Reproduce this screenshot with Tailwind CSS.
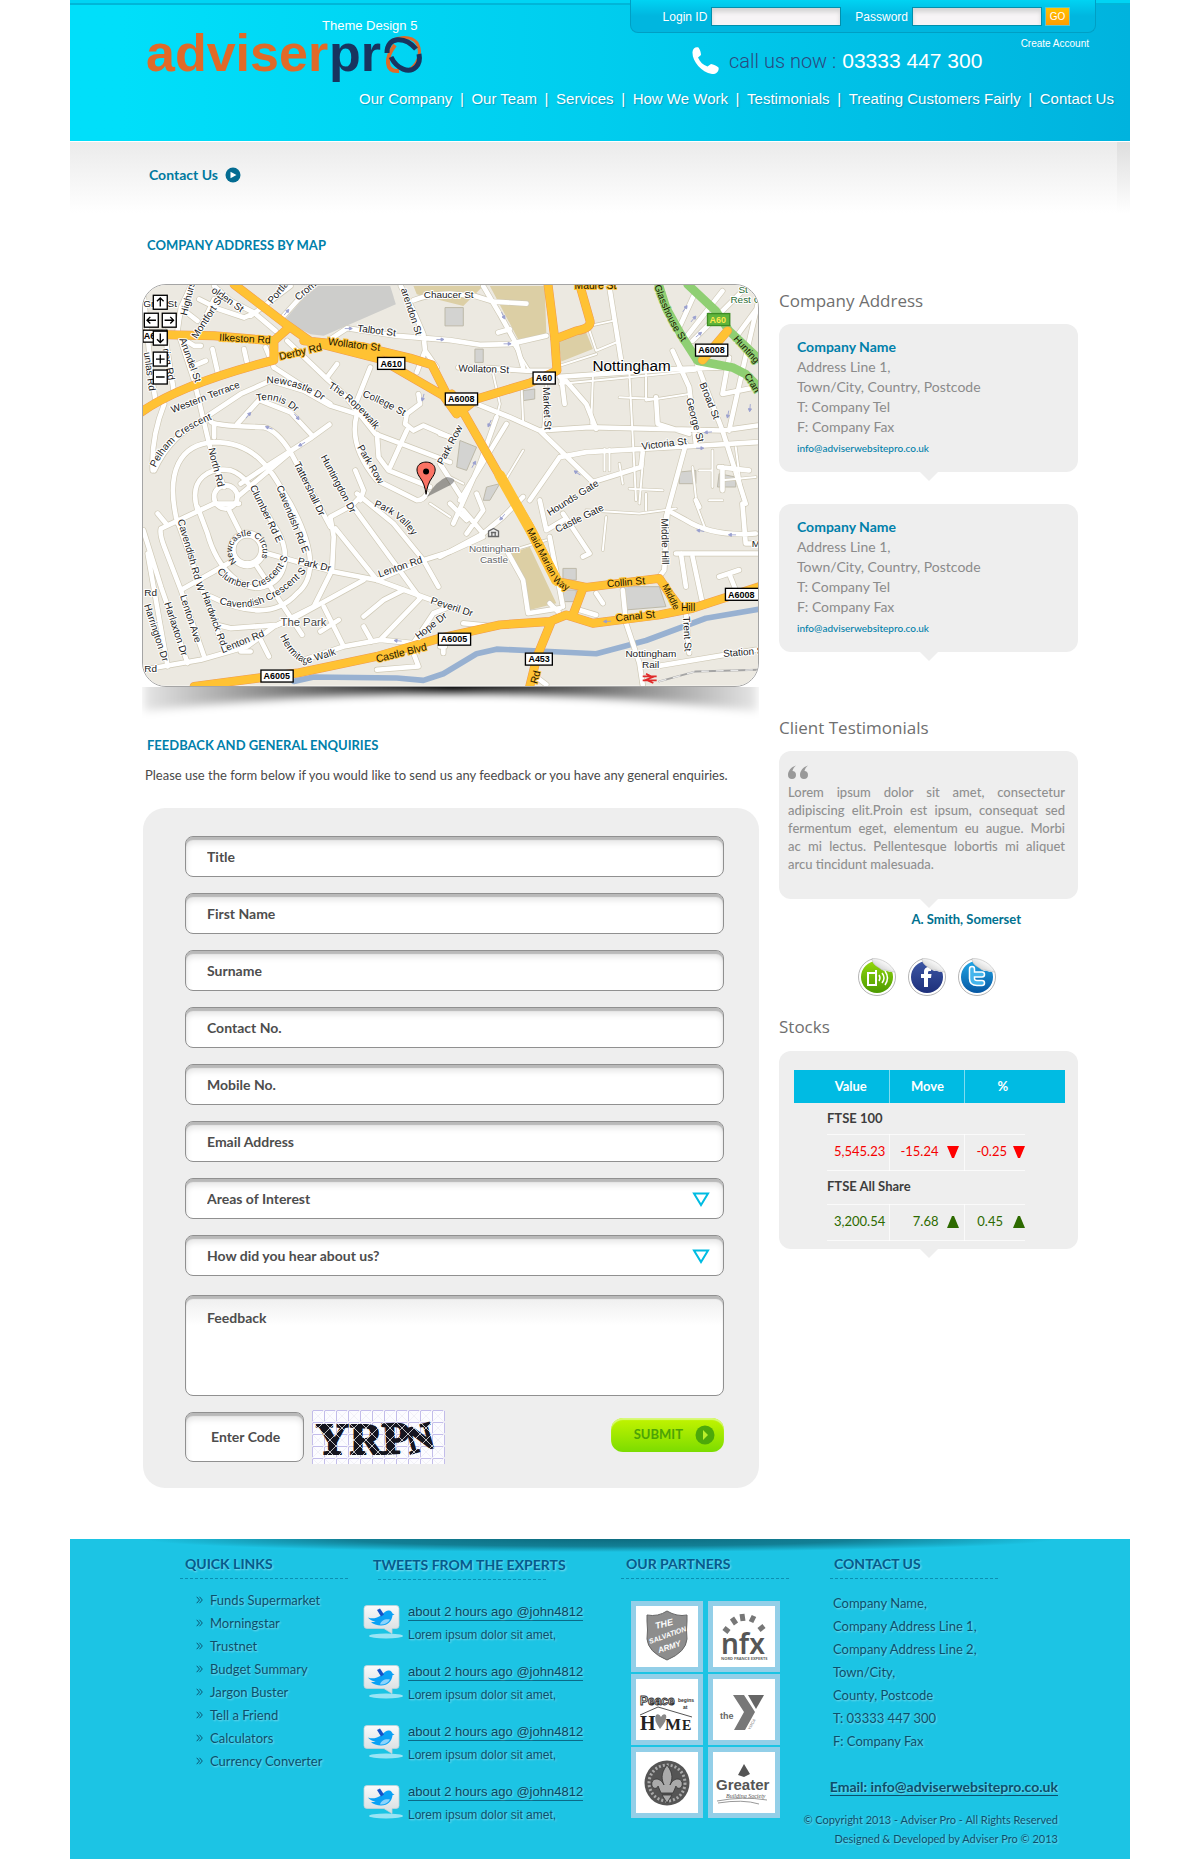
<!DOCTYPE html>
<html lang="en">
<head>
<meta charset="utf-8">
<meta name="viewport" content="width=device-width, initial-scale=1">
<title>Contact Us - Adviser Pro</title>
<script src="https://cdn.jsdelivr.net/npm/@tailwindcss/browser@4"></script>
</head>
<body class="bg-white font-['Lato','Open_Sans',sans-serif] text-[14px] text-[#4a4a4a]">
<svg class="absolute size-0" aria-hidden="true">
  <defs>
    <linearGradient id="bubble" x1="0" y1="0" x2="0" y2="1"><stop offset="0" stop-color="#fafafa"/><stop offset="1" stop-color="#d5dde0"/></linearGradient>
    <linearGradient id="gGreen" x1="0" y1="0" x2="0" y2="1"><stop offset="0" stop-color="#93d80d"/><stop offset="1" stop-color="#4c9a00"/></linearGradient>
    <linearGradient id="gNavy" x1="0" y1="0" x2="0" y2="1"><stop offset="0" stop-color="#3d57a5"/><stop offset="1" stop-color="#1d2f7a"/></linearGradient>
    <linearGradient id="gBlue" x1="0" y1="0" x2="0" y2="1"><stop offset="0" stop-color="#22a6e6"/><stop offset="1" stop-color="#0556a2"/></linearGradient>
    <linearGradient id="fold" x1="0" y1="1" x2="1" y2="0"><stop offset="0" stop-color="#bdbdbd"/><stop offset=".6" stop-color="#f4f4f4"/><stop offset="1" stop-color="#ffffff"/></linearGradient>
    <symbol id="tweet" viewBox="0 0 40 34">
      <ellipse cx="23" cy="31" rx="17" ry="2.4" fill="#b9ecf7" opacity=".8"/>
      <path d="M4 .5h29a3 3 0 0 1 3 3v17a3 3 0 0 1-3 3h-4v5l-8-5H4a3 3 0 0 1-3-3v-17a3 3 0 0 1 3-3z" fill="url(#bubble)" stroke="#c3d3d8" stroke-width=".8"/>
      <path d="M5 12.500c4 1.500 8 1 12-1.500 3-1.500 5-6 9-5.500 2 0 3 1.500 3.500 3l2 1-2 .8C29 16 25 20.500 18 20.500c-4 0-8-1.500-10-3.500 2 0 3.500 0 4.500-.5C9 16 6 14 5 12.500z" fill="#0aa2f5"/>
      <path d="M14 5l3-1.500 4 6-3 2z" fill="#1553c8"/>
      <path d="M17 19.500c1-4 5-6 10-5-2 4-6 5.500-10 5z" fill="#8bd3fb"/>
    </symbol>
    <symbol id="chev" viewBox="0 0 7 8"><path d="M.7.800L3.500 4 .7 7.200M3.500.800L6.300 4 3.500 7.200" fill="none" stroke="#0b5572" stroke-width="1"/></symbol>
    <symbol id="arrow" viewBox="0 0 24 12"><path d="M0 6H17M14 1l9 5-9 5z" fill="#9aa0cf" stroke="#9aa0cf" stroke-width="2.500"/></symbol>
  </defs>
</svg>

<div class="mx-auto w-full max-w-[1060px]">

  <header class="bg-linear-to-r from-[#00dffa] from-5% via-[#00cdee] via-50% to-[#00b3de] font-['Liberation_Sans',Arial,sans-serif] text-white">
    <div class="h-[5px] border-b-2 border-[#00a9cc]/70 bg-[#00d4f4]"></div>
    <div class="flex items-start justify-between">
      <a href="#" class="ml-[76px] block pt-3" aria-label="Adviser Pro, Theme Design 5">
        <svg class="block h-[66px] w-[280px]" viewBox="0 0 280 66" font-family="Liberation Sans, Arial, sans-serif">
          <text x="176" y="13" font-size="13" fill="#fff">Theme Design 5</text>
          <text x="0" y="54" font-size="52" font-weight="700" fill="#e06a28">adviser</text>
          <text x="183" y="54" font-size="52" font-weight="700" fill="#18345f">pr</text>
          <g fill="none" transform="translate(257 37)">
            <path d="M-15-9C-10-18 8-19 14-11 20 0 14 12 4 17" stroke="#e06a28" stroke-width="3"/>
            <path d="M-4 17C-18 18-18 4-8-9" stroke="#e06a28" stroke-width="4"/>
            <path d="M-16-1C-16-18 2-18 13-5" stroke="#18345f" stroke-width="5"/>
            <path d="M-12 3C-6 15 6 20 13 13 17 9 17 5 16 0" stroke="#18345f" stroke-width="5"/>
          </g>
        </svg>
      </a>
      <div class="mr-[34px] -mt-[5px] w-[466px]">
        <form class="flex h-[33px] items-start justify-end rounded-b-lg border-x border-b border-[#009fc4] bg-linear-to-b from-[#00d3f3] to-[#00b6df] to-50% pt-[7px] pr-[25px] text-[12px] leading-5">
          <label for="login" class="mr-1">Login ID</label>
          <input id="login" type="text" class="h-[19px] w-[130px] border border-[#0090ad] bg-[#f7f4f6] px-1 text-gray-700 shadow-[inset_0_4px_4px_#d4d4d4]">
          <label for="pass" class="mr-1 ml-[14px]">Password</label>
          <input id="pass" type="password" class="h-[19px] w-[130px] border border-[#0090ad] bg-[#f7f4f6] px-1 text-gray-700 shadow-[inset_0_4px_4px_#d4d4d4]">
          <button type="submit" class="ml-[3px] h-[19px] w-[25px] border border-[#5cc6d0] bg-linear-to-b from-[#ffc000] to-[#ff9c00] text-[10px] leading-4">GO</button>
        </form>
        <div class="flex justify-between pr-[7px]">
          <p class="flex items-center pt-[12px] pl-[62px] text-[21px] leading-8">
            <svg class="mr-[10px] h-7 w-[27px]" viewBox="0 0 27 28" aria-hidden="true"><path d="M6.500.500c1.500 2 2.500 5 2.500 7.500L6 10.500c2 4.500 5 7.500 9.500 9l3.500-2.500c2.500.5 5.500 1.500 7.500 3.500 1 3.500-2.500 7-6.500 6.500C9 25 0 14 .5 5 .8 1.500 3.500-.5 6.500.500z" fill="#fff"/></svg>
            <span class="mr-[6px] font-['Roboto',sans-serif] text-[20px] font-light text-[#2b4a80]">call us now :</span><span>03333 447 300</span>
          </p>
          <a href="#" class="pt-[3px] text-[10px] leading-4">Create Account</a>
        </div>
      </div>
    </div>
    <nav class="mr-4 ml-auto flex max-w-[755px] justify-between pt-[5px] pb-[31px] text-[15px] leading-[22px] [text-shadow:1px_1px_1px_rgba(0,110,150,.5)]">
      <a href="#">Our Company</a><span>|</span><a href="#">Our Team</a><span>|</span><a href="#">Services</a><span>|</span><a href="#">How We Work</a><span>|</span><a href="#">Testimonials</a><span>|</span><a href="#">Treating Customers Fairly</a><span>|</span><a href="#">Contact Us</a>
    </nav>
  </header>

  <div class="flex h-[72px] border-t border-white bg-linear-to-b from-[#ebebeb] to-white">
    <div class="flex flex-1 items-start gap-[7px] pt-[23px] pl-[79px]">
      <h1 class="text-[14px] leading-5 font-bold text-[#00799f]">Contact Us</h1>
      <svg class="mt-[2px] size-4" viewBox="0 0 16 16" aria-hidden="true"><circle cx="8" cy="8" r="7.500" fill="#046c92"/><path d="M5.500 4.800v6.400L11.500 8z" fill="#fff"/></svg>
    </div>
    <div class="w-[13px] bg-linear-to-b from-[#dedede] to-white"></div>
  </div>

  <main class="flex items-start gap-5 pr-[52px] pl-[72px]">
    <div class="w-[617px] shrink">
      <h2 class="mt-[22px] pl-[5px] text-[13px] leading-5 font-bold text-[#0080aa]">COMPANY ADDRESS BY MAP</h2>
      <figure class="mt-[29px]">
        <svg class="block h-auto w-full rounded-[24px] border border-[#a5a5a5]" viewBox="36 42 1851 1206" font-family="Liberation Sans, Arial, sans-serif" role="img" aria-label="Street map of Nottingham">
          <defs>
            <g id="wide">
              <path d="M180 45L150 110 140 180 190 330 235 520 260 600 280 650M250 45L300 90 370 125 435 180M480 45L360 135M540 45L455 140M205 85L265 115 340 140 375 125M250 85L200 190M37 100H130M155 115L200 150M37 60L60 300 75 400M100 180L130 370M150 200L190 225H210M190 285L225 270M245 235L262 310M340 235L350 280M405 230L430 290M600 205L650 172 800 195 960 208 1050 222 1140 220 1250 195M812 45L850 120 880 190 885 240 920 290M885 240L860 305M850 88Q900 68 960 68L1035 75 1090 92 1190 98"/>
              <path d="M225 440L330 370 420 330 520 360 600 405 680 430M430 290L600 400M470 210L590 325 640 370 735 490 960 575M720 290L680 390M680 430C660 500 690 570 740 630L860 690Q880 690 890 670M740 490L745 560 775 600 900 650M830 480L780 590M865 370L870 400 830 430 825 460 850 480 880 465 960 500M620 280L590 320M240 450Q230 465 400 470 440 480 480 545L600 770M320 460L385 388 480 425 545 495M597 462L545 500 420 580 330 640M100 400Q60 500 65 600M225 445Q120 490 70 600M250 460V500M675 600L700 660 690 690"/>
              <path d="M140 760C100 600 150 520 250 515 390 515 430 620 480 700 550 830 560 920 500 970 420 1060 300 1010 240 980M200 720C170 620 240 590 300 600 360 620 380 690 440 780 480 850 470 930 400 950 340 970 260 900 230 790L200 710M320 680L480 545M325 700L250 700 90 775Q85 790 100 830L150 960 220 1160M80 730L105 760M135 740L200 920 280 1140M37 780L90 950 170 1180M50 850L110 1190M37 1200L210 1170 350 1130 430 1070 500 1040 700 930M740 930L880 870 960 845 1060 800M150 960L310 870M295 720L330 790M380 890L515 1095M410 850L500 875 610 905 740 930 890 985 960 1010"/>
              <path d="M600 740L610 800 605 900 550 1010 440 1065 300 1075 260 1065M615 775L740 930M665 705L870 985 750 1110 640 1130 520 1170M600 740L665 705 690 680M680 670L790 760 880 870 925 950M580 1010L640 1130M700 1040L760 990 820 960M700 1070L725 1115M750 1110L850 1120 910 1030 960 1010M330 1145H360M390 1110L415 1160M570 1085L625 1050M850 1150L865 1190 740 1200M940 1130V1150"/>
              <path d="M1060 45L1110 130 1160 220 1180 290M1105 185L1140 175M985 290L1080 292 1190 300 1280 300M1290 318L1640 295 1780 290M1440 50L1480 300M1300 320L1370 400 1400 475M1295 320L1305 400M1040 400L1140 440 1230 480 1390 635M1230 480L1380 470 1780 480 1886 465M1290 560L1370 545 1720 525 1886 515M1390 635L1535 590 1540 545M1290 560L1200 690M1630 240L1680 350 1700 520M1700 270L1730 350 1780 480 1850 700M1100 440L1050 580 970 760M1130 460L990 690M930 490L960 500M930 580L1000 690M1670 520L1610 740M1580 380L1585 460 1680 490M1886 100L1840 300 1800 480M1700 60L1650 170M1850 50L1690 210M1780 60L1670 200M1886 110L1820 200M1800 260L1780 370 1880 350M1770 590L1860 600M1780 590V660"/>
              <path d="M930 860L1060 790 1120 740 1180 680M1010 790L1060 720 1040 670M1010 750L960 700M1060 790L1000 720M1130 840L1180 930 1195 1030 1290 1015M1260 1000L1300 1040M1260 800L1300 1010M1230 690L1250 780 1300 750M1300 730L1380 850 1360 860M1615 720L1670 750Q1750 800 1880 790M1615 720L1605 900 1590 920M1640 850H1886M1655 850L1670 950M1690 860L1720 1000M1770 920L1830 900M1800 910L1820 960M1480 960L1490 1060 1530 1180 1540 1245M1400 970L1420 1000M1350 1020L1400 1035M1670 1030L1680 1150M1580 1190L1880 1140M1000 1060L1100 1070M930 1130H945M1700 690L1710 710M1840 700L1850 820 1886 820M1210 1215L1250 1245"/>
            </g>
            <path id="thin" d="M1380 165L1450 150M1380 180L1400 240 1460 215M1290 285L1400 250M1150 220L1200 300M1090 310L1110 400 1100 440M1175 340L1180 450M1500 310L1520 690M1550 310V390L1680 370M1470 380L1580 385M1390 320L1385 460M1425 535V600M1440 535L1440 600M1290 340L1700 300M1180 540L1120 640M1690 590L1700 680M1880 620L1780 630M1500 655L1600 660M1370 720L1530 730 1640 715M1430 740L1420 840M1750 540V650M1710 600L1750 600M1550 670V720M1740 690L1780 690M1700 700L1730 780M1820 530L1840 680M900 700L960 740M960 620L1000 640M1150 840L1250 810M1240 480L1250 340M1540 580L1530 700M1470 580L1480 640"/>
            <path id="main" d="M310 40L460 155 540 212M30 190L250 195 430 210M30 425Q150 340 430 268L430 210 475 170M520 210L700 228 840 262 905 282 965 400 980 420M540 212L750 265 940 375 980 430M965 370L1000 425 1100 600 1200 770 1285 935 1370 952 1590 925 1620 970 1650 1010M190 1250L500 1210 740 1160 930 1105 1110 1065 1260 1055 1310 1035 1390 1060 1590 1035 1690 1015 1890 950M1360 955L1330 1035M1265 1055L1222 1160 1200 1250M1255 40L1275 200 1282 300 1200 337 1040 385 990 425M1350 40L1380 145Q1390 172 1340 180L1275 205M1795 180L1720 268"/>
            <path id="pNewc" d="M408 338Q500 335 590 400"/><path id="pTennis" d="M378 392Q450 375 510 440"/><path id="pPelham" d="M74 592Q120 490 260 440"/>
            <path id="pRope" d="M592 350Q690 410 750 500"/><path id="pColl" d="M695 378Q760 400 850 455"/><path id="pClum" d="M258 905Q310 970 400 945 460 910 480 840"/>
            <path id="pCav" d="M265 1000Q400 1050 540 890"/><path id="pCircus" d="M318 876A46 46 0 1 1 392 862"/><path id="pHerm" d="M448 1100Q485 1175 530 1182L670 1138"/>
            <path id="pPark" d="M730 708Q820 740 860 820"/><path id="pMaid" d="M1190 780L1270 930Q1290 960 1370 985"/>
            <path id="pGlass" d="M1575 45Q1620 180 1695 260"/>
          </defs>
          <rect x="36" y="42" width="1851" height="1206" fill="#ece9e1"/>
          <path d="M550 45H780L797 100 580 195 540 190 460 150z" fill="#cdcdcb"/>
          <path d="M850 45H1060L1000 105 860 70zM1080 45H1245L1250 190 1165 205zM1285 205L1370 185 1390 235 1295 272zM1145 850L1200 830 1280 1000 1200 1020z" fill="#dccfa5"/>
          <path d="M945 110H1000V165H945zM1035 235H1060V275H1035zM1180 360L1215 355V385L1180 390zM990 510L1040 530 1010 600 980 590zM1070 650L1110 640 1080 690 1060 690zM1300 895H1340V930H1300zM1300 960H1340V995H1300zM1485 950H1590L1610 1010 1490 1020zM1650 605L1700 600V640H1650zM1770 610L1820 620V650L1765 650z" fill="#d3d3d1" stroke="#bdb9a9" stroke-width="3"/>
          <g fill="none" stroke-linejoin="round" stroke-linecap="round">
            <path d="M490 1235L550 1222 800 1225 880 1232 940 1212 1040 1152 1100 1138 1260 1145 1400 1152 1550 1112 1730 1045 1890 1018" stroke="#98b1d1" stroke-width="17"/>
            <use href="#thin" stroke="#cfc9b6" stroke-width="10"/>
            <use href="#wide" stroke="#cfc9b6" stroke-width="18"/>
            <circle cx="285" cy="680" r="35" stroke="#cfc9b6" stroke-width="18"/>
            <circle cx="350" cy="838" r="46" stroke="#cfc9b6" stroke-width="26"/>
            <use href="#thin" stroke="#fff" stroke-width="6"/>
            <use href="#wide" stroke="#fff" stroke-width="14"/>
            <circle cx="285" cy="680" r="35" stroke="#fff" stroke-width="14"/>
            <circle cx="350" cy="838" r="46" stroke="#fff" stroke-width="22"/>
            <path d="M1588 40L1610 110 1660 200 1705 270 1810 290 1850 310 1890 350M1675 40L1760 120 1800 180 1890 265" stroke="#8fcf73" stroke-width="26"/>
            <use href="#main" stroke="#ef9a52" stroke-width="27"/>
            <use href="#main" stroke="#ffc233" stroke-width="24"/>
            <path d="M1110 615L1200 775 1280 930" stroke="#ffc233" stroke-width="32"/>
            <path d="M1590 1235L1700 1205 1890 1200" stroke="#a5a5a5" stroke-width="6"/>
            <path d="M1590 1235L1700 1205 1890 1200" stroke="#e8e8e8" stroke-width="4" stroke-dasharray="20 24"/>
          </g>
          <g>
            <use href="#arrow" width="26" height="12" x="642" y="167"/><use href="#arrow" width="26" height="12" x="918" y="200"/><use href="#arrow" width="26" height="12" x="1120" y="213"/>
            <use href="#arrow" width="26" height="12" transform="translate(455 130) rotate(-50)"/><use href="#arrow" width="26" height="12" transform="translate(340 440) rotate(-50)"/><use href="#arrow" width="26" height="12" transform="translate(495 425) rotate(50)"/>
            <use href="#arrow" width="26" height="12" transform="translate(425 482) rotate(200)"/><use href="#arrow" width="26" height="12" transform="translate(528 520) rotate(150)"/><use href="#arrow" width="26" height="12" transform="translate(888 370) rotate(105)"/>
            <use href="#arrow" width="26" height="12" transform="translate(1120 120) rotate(65)"/><use href="#arrow" width="26" height="12" transform="translate(1090 450) rotate(115)"/><use href="#arrow" width="26" height="12" transform="translate(1020 590) rotate(-60)"/>
            <use href="#arrow" width="26" height="12" transform="translate(1350 620) rotate(215)"/><use href="#arrow" width="26" height="12" transform="translate(1750 490) rotate(175)"/><use href="#arrow" width="26" height="12" x="1700" y="527"/>
            <use href="#arrow" width="26" height="12" transform="translate(1655 120) rotate(-55)"/><use href="#arrow" width="26" height="12" transform="translate(1680 150) rotate(-50)"/><use href="#arrow" width="26" height="12" transform="translate(1695 195) rotate(-40)"/>
            <use href="#arrow" width="26" height="12" transform="translate(1805 420) rotate(100)"/><use href="#arrow" width="26" height="12" transform="translate(1870 400) rotate(95)"/><use href="#arrow" width="26" height="12" transform="translate(1130 735) rotate(130)"/>
            <use href="#arrow" width="26" height="12" transform="translate(1725 790) rotate(190)"/><use href="#arrow" width="26" height="12" transform="translate(1822 800) rotate(180)"/><use href="#arrow" width="26" height="12" transform="translate(1446 1060) rotate(178)"/><use href="#arrow" width="26" height="12" transform="translate(815 1120) rotate(185)"/>
          </g>
          <g font-size="30" fill="#1c1c1c" stroke="#fff" stroke-width="6" stroke-linejoin="round" paint-order="stroke">
            <text transform="translate(240 62) rotate(35)">olden St</text><text transform="translate(168 135) rotate(-76)">Highurs</text><text transform="translate(198 205) rotate(-57)">Montfort St</text>
            <text x="37" y="108">Gra</text><text x="110" y="108">St</text><text transform="translate(145 205) rotate(70)">Arundel St</text><text transform="translate(38 245) rotate(82)">unlas Rd</text><text transform="translate(95 235) rotate(80)">ring Rd</text>
            <text transform="translate(425 100) rotate(-50)">Portla</text><text transform="translate(503 90) rotate(-40)">Crom</text><text transform="translate(812 55) rotate(72)">arendon St</text><text x="881" y="82">Chaucer St</text>
            <text transform="translate(680 182) rotate(7)">Talbot St</text><text transform="translate(125 428) rotate(-21)">Western Terrace</text>
            <text><textPath href="#pNewc">Newcastle Dr</textPath></text><text><textPath href="#pTennis">Tennis Dr</textPath></text><text><textPath href="#pPelham">Pelham Crescent</textPath></text>
            <text><textPath href="#pRope">The Ropewalk</textPath></text><text><textPath href="#pColl">College St</textPath></text><text><textPath href="#pClum">Clumber Crescent S</textPath></text><text><textPath href="#pCav">Cavendish Crescent S</textPath></text>
            <text font-size="26" stroke="none"><textPath href="#pCircus">Newcastle Circus</textPath></text><text><textPath href="#pHerm">Hermitage Walk</textPath></text><text><textPath href="#pPark">Park Valley</textPath></text>
            <text transform="translate(232 535) rotate(76)">North Rd</text><text transform="translate(680 530) rotate(60)">Park Row</text><text transform="translate(570 560) rotate(62)">Huntingdon Dr</text><text transform="translate(490 580) rotate(64)">Tattershall Dr</text>
            <text transform="translate(437 650) rotate(68)">Cavendish Rd E</text><text transform="translate(357 650) rotate(64)">Clumber Rd E</text><text transform="translate(140 750) rotate(74)">Cavendish Rd W</text><text transform="translate(212 970) rotate(70)">Hardwick Rd</text>
            <text transform="translate(147 978) rotate(72)">Lenton Ave</text><text transform="translate(100 1000) rotate(72)">Harlaxton Dr</text><text transform="translate(39 1006) rotate(72)">Harrington Dr</text><text x="40" y="977">Rd</text><text x="40" y="1206">Rd</text>
            <text transform="translate(275 1150) rotate(-22)">Lenton Rd</text><text transform="translate(748 922) rotate(-19)">Lenton Rd</text><text transform="translate(500 882) rotate(13)">Park Dr</text><text transform="translate(865 1110) rotate(-38)">Hope Dr</text><text transform="translate(900 1000) rotate(18)">Peveril Dr</text>
            <text transform="translate(938 585) rotate(-62)">Park Row</text><text transform="translate(985 302) rotate(2)">Wollaton St</text><text transform="translate(1240 350) rotate(88)">Market St</text><text transform="translate(1710 340) rotate(68)">Broad St</text><text transform="translate(1670 385) rotate(75)">George St</text>
            <text transform="translate(1538 538) rotate(-7)">Victoria St</text><text transform="translate(1260 738) rotate(-32)">Hounds Gate</text><text transform="translate(1283 788) rotate(-26)">Castle Gate</text><text transform="translate(1596 745) rotate(89)">Middle Hill</text><text transform="translate(1661 1040) rotate(87)">Trent St</text>
            <text transform="translate(1783 1162) rotate(-5)">Station S</text><text x="1488" y="1163">Nottingham</text><text x="1538" y="1196">Rail</text><text x="1868" y="830">M</text><g fill="#2c6b33"><text x="1828" y="65">St</text><text x="1804" y="96">Rest G</text></g>
            <text x="1017" y="847" fill="#666">Nottingham</text><text x="1050" y="880" fill="#666">Castle</text><text x="450" y="1068" font-size="34" fill="#444">The Park</text>
            <text x="1389" y="300" font-size="46" fill="#000">Nottingham</text>
          </g>
          <g font-size="31" fill="#1a1400" stroke="#ffc233" stroke-width="6" paint-order="stroke">
            <text transform="translate(265 210) rotate(3)">Ilkeston Rd</text><text transform="translate(448 268) rotate(-13)">Derby Rd</text><text transform="translate(592 222) rotate(7)">Wollaton St</text><text transform="translate(740 1178) rotate(-14)">Castle Blvd</text>
            <text font-size="29"><textPath href="#pMaid">Maid Marian Way</textPath></text><text transform="translate(1433 952) rotate(-5)">Collin St</text><text transform="translate(1460 1055) rotate(-6)">Canal St</text><text font-size="28" transform="translate(1598 948) rotate(63)">Middle</text><text x="1655" y="1024">Hill</text>
            <text x="1335" y="54">Maure St</text><text transform="translate(1222 1244) rotate(-75)">Rd</text>
            <g stroke="#8fcf73" font-size="29"><text><textPath href="#pGlass">Glasshouse St</textPath></text><text transform="translate(1812 205) rotate(48)">Hunting</text><text transform="translate(1845 315) rotate(58)">Cran</text></g>
          </g>
          <g fill="#fff" stroke="#000" stroke-width="4"><rect x="742" y="260" width="82" height="36"/><rect x="1210" y="304" width="67" height="36"/><rect x="946" y="367" width="97" height="36"/><rect x="1699" y="220" width="97" height="36"/><rect x="391" y="1201" width="97" height="36"/><rect x="925" y="1090" width="97" height="36"/><rect x="1187" y="1150" width="81" height="36"/><rect x="1789" y="955" width="100" height="36"/><rect x="36" y="178" width="72" height="36"/><rect x="1735" y="128" width="67" height="36" fill="#60b53c" stroke="#3c8d24"/></g>
          <g font-size="27" font-weight="700" fill="#000"><text x="751" y="288">A610</text><text x="1218" y="332">A60</text><text x="954" y="395">A6008</text><text x="1707" y="248">A6008</text><text x="399" y="1229">A6005</text><text x="932" y="1118">A6005</text><text x="1196" y="1178">A453</text><text x="1797" y="983">A6008</text><text x="38" y="206">A6</text><text x="1741" y="156" fill="#ffe84a">A60</text></g>
          <g transform="translate(1091 787)" fill="none" stroke="#666" stroke-width="4"><path d="M-15 12V-4L0-12 15-4V12zM-8 0H8M-5 0V10M5 0V10" fill="#eee"/></g>
          <path d="M1540 1220H1582M1540 1232H1582M1550 1212L1570 1222 1550 1230 1572 1240" fill="none" stroke="#e02b2b" stroke-width="5"/>
          <path d="M890 680Q920 630 950 620 990 625 960 645z" fill="#000" opacity=".35"/>
          <path d="M888 672Q884 640 870 622C850 595 865 575 888 575S926 595 906 622Q892 640 888 672z" fill="#fb7364" stroke="#000" stroke-width="3"/><circle cx="888" cy="603" r="9"/>
          <g fill="#fff" stroke="#000" stroke-width="4"><rect x="67" y="73" width="42" height="42"/><rect x="40" y="127" width="42" height="42"/><rect x="94" y="127" width="42" height="42"/><rect x="67" y="181" width="42" height="42"/><rect x="67" y="244" width="42" height="42"/><rect x="67" y="298" width="42" height="42"/>
          <path fill="none" d="M88 107V81M78 91L88 81 98 91M75 148H48M58 138L48 148 58 158M101 148H128M118 138L128 148 118 158M88 188V215M78 205L88 215 98 205M75 265H101M88 252V278M75 319H101"/></g>
        </svg>
        <svg class="block h-[34px] w-full" viewBox="0 0 617 34" preserveAspectRatio="none" aria-hidden="true">
          <defs><linearGradient id="ms"><stop offset="0" stop-color="#000" stop-opacity=".1"/><stop offset=".2" stop-color="#000" stop-opacity=".45"/><stop offset=".5" stop-color="#000"/><stop offset=".8" stop-color="#000" stop-opacity=".45"/><stop offset="1" stop-color="#000" stop-opacity=".1"/></linearGradient><filter id="mb" x="-5%" y="-40%" width="110%" height="180%"><feGaussianBlur stdDeviation="4"/></filter></defs>
          <path d="M2-12H615V24Q450 6 308 6T2 24z" fill="url(#ms)" filter="url(#mb)"/>
        </svg>
      </figure>

      <h2 class="mt-[14px] pl-[5px] text-[13px] leading-5 font-bold text-[#0080aa]">FEEDBACK AND GENERAL ENQUIRIES</h2>
      <p class="mt-[10px] pl-[3px] text-[13px] leading-5">Please use the form below if you would like to send us any feedback or you have any general enquiries.</p>

      <form class="mt-[23px] ml-px flex flex-col gap-4 rounded-[22px] bg-[#eeeeee] pt-7 pr-[35px] pb-6 pl-[42px] text-[14px] font-bold text-[#4d4d4d]">
        <div><label class="sr-only" for="f1">Title</label>
        <input id="f1" placeholder="Title" class="block h-[41px] w-full rounded-lg border border-[#909090] bg-white px-[21px] placeholder:text-[#4d4d4d] shadow-[inset_0_3px_1px_#b9b9b9,inset_0_6px_6px_#e4e4e4]"></div>
        <div><label class="sr-only" for="f2">First Name</label>
        <input id="f2" placeholder="First Name" class="block h-[41px] w-full rounded-lg border border-[#909090] bg-white px-[21px] placeholder:text-[#4d4d4d] shadow-[inset_0_3px_1px_#b9b9b9,inset_0_6px_6px_#e4e4e4]"></div>
        <div><label class="sr-only" for="f3">Surname</label>
        <input id="f3" placeholder="Surname" class="block h-[41px] w-full rounded-lg border border-[#909090] bg-white px-[21px] placeholder:text-[#4d4d4d] shadow-[inset_0_3px_1px_#b9b9b9,inset_0_6px_6px_#e4e4e4]"></div>
        <div><label class="sr-only" for="f4">Contact No.</label>
        <input id="f4" placeholder="Contact No." class="block h-[41px] w-full rounded-lg border border-[#909090] bg-white px-[21px] placeholder:text-[#4d4d4d] shadow-[inset_0_3px_1px_#b9b9b9,inset_0_6px_6px_#e4e4e4]"></div>
        <div><label class="sr-only" for="f5">Mobile No.</label>
        <input id="f5" placeholder="Mobile No." class="block h-[41px] w-full rounded-lg border border-[#909090] bg-white px-[21px] placeholder:text-[#4d4d4d] shadow-[inset_0_3px_1px_#b9b9b9,inset_0_6px_6px_#e4e4e4]"></div>
        <div><label class="sr-only" for="f6">Email Address</label>
        <input id="f6" type="email" placeholder="Email Address" class="block h-[41px] w-full rounded-lg border border-[#909090] bg-white px-[21px] placeholder:text-[#4d4d4d] shadow-[inset_0_3px_1px_#b9b9b9,inset_0_6px_6px_#e4e4e4]"></div>
        <div class="relative">
          <label class="sr-only" for="f7">Areas of Interest</label>
          <select id="f7" class="block h-[41px] w-full appearance-none rounded-lg border border-[#909090] bg-white px-[21px] shadow-[inset_0_3px_1px_#b9b9b9,inset_0_6px_6px_#e4e4e4]"><option>Areas of Interest</option></select>
          <svg class="pointer-events-none absolute top-[14px] right-[14px] h-[15px] w-[18px]" viewBox="0 0 18 15"><path d="M2 1.500H16L9 13z" fill="none" stroke="#00bce2" stroke-width="2"/></svg>
        </div>
        <div class="relative">
          <label class="sr-only" for="f8">How did you hear about us?</label>
          <select id="f8" class="block h-[41px] w-full appearance-none rounded-lg border border-[#909090] bg-white px-[21px] shadow-[inset_0_3px_1px_#b9b9b9,inset_0_6px_6px_#e4e4e4]"><option>How did you hear about us?</option></select>
          <svg class="pointer-events-none absolute top-[14px] right-[14px] h-[15px] w-[18px]" viewBox="0 0 18 15"><path d="M2 1.500H16L9 13z" fill="none" stroke="#00bce2" stroke-width="2"/></svg>
        </div>
        <div class="pt-[3px]"><label class="sr-only" for="f9">Feedback</label>
        <textarea id="f9" placeholder="Feedback" class="block h-[101px] w-full resize-none rounded-lg border border-[#909090] bg-linear-to-b from-[#eeeeee] to-white to-30% px-[21px] pt-3 leading-5 placeholder:text-[#4d4d4d] shadow-[inset_0_3px_1px_#b9b9b9]"></textarea></div>
        <div class="-mt-[2px] flex items-center">
          <label class="sr-only" for="f10">Enter Code</label>
          <input id="f10" placeholder="Enter Code" class="h-[50px] w-[119px] rounded-lg border border-[#909090] bg-white pr-1 pl-[25px] placeholder:text-[#4d4d4d] shadow-[inset_0_3px_1px_#b9b9b9,inset_0_6px_6px_#e4e4e4]">
          <svg class="ml-2 h-[54px] w-[133px]" viewBox="0 0 133 54" role="img" aria-label="Security code">
            <defs><pattern id="net" width="12" height="12" patternUnits="userSpaceOnUse"><path d="M0 0H12M0 0V12" stroke="#c3bdea" stroke-width="2"/><path d="M0 0L12 12M12 0L0 12" stroke="#9d97c4" stroke-width=".7" opacity=".7"/></pattern>
            <pattern id="net2" width="12" height="12" patternUnits="userSpaceOnUse"><path d="M0 0L12 12M12 0L0 12" stroke="#fff" stroke-width=".9"/></pattern></defs>
            <rect width="133" height="54" fill="#fcfcff"/><rect width="133" height="54" fill="url(#net)"/>
            <g font-family="Liberation Serif, serif" font-weight="700" font-size="45" fill="#15151f" stroke="#15151f" stroke-width="2"><text x="4" y="44">Y</text><text x="38" y="44">R</text><text transform="translate(71 44) rotate(-3)">P</text><text transform="translate(98 44) rotate(-16)" font-size="38">N</text></g>
            <rect width="133" height="54" fill="url(#net2)" opacity=".8"/>
          </svg>
          <button type="submit" class="mb-1 ml-auto flex h-[34px] w-[113px] items-center justify-end gap-3 rounded-xl bg-linear-to-b from-[#c2f400] to-[#7bdc00] pr-[9px] text-[13px] font-bold text-[#4ca306] shadow-[inset_0_2px_1px_#d8f97a]">SUBMIT
            <svg class="size-5" viewBox="0 0 20 20" aria-hidden="true"><circle cx="10" cy="10" r="9.500" fill="#4ca80a"/><path d="M8 5v10l5-5z" fill="#b9ef2a"/></svg>
          </button>
        </div>
      </form>
    </div>

    <aside class="mt-[76px] w-[299px] shrink-0">
      <h2 class="font-['Open_Sans',sans-serif] text-[17px] leading-6 text-[#6f6f6f]">Company Address</h2>
      <section class="mt-[11px] flex h-[157px] flex-col items-center">
        <div class="h-[148px] w-full rounded-xl bg-[#eeeeee] px-[18px] pt-[13px] text-[14px] leading-5 text-[#8b8b8b]">
          <h3 class="font-bold text-[#0080aa]">Company Name</h3><p>Address Line 1,</p><p>Town/City, Country, Postcode</p><p>T: Company Tel</p><p>F: Company Fax</p>
          <a href="#" class="block text-[10px] leading-[22px] font-medium text-[#0080aa]">info@adviserwebsitepro.co.uk</a>
        </div>
        <svg class="h-[9px] w-[18px]" viewBox="0 0 18 9"><path d="M0 0H18L9 9z" fill="#eee"/></svg>
      </section>
      <section class="mt-[23px] flex h-[157px] flex-col items-center">
        <div class="h-[148px] w-full rounded-xl bg-[#eeeeee] px-[18px] pt-[13px] text-[14px] leading-5 text-[#8b8b8b]">
          <h3 class="font-bold text-[#0080aa]">Company Name</h3><p>Address Line 1,</p><p>Town/City, Country, Postcode</p><p>T: Company Tel</p><p>F: Company Fax</p>
          <a href="#" class="block text-[10px] leading-[22px] font-medium text-[#0080aa]">info@adviserwebsitepro.co.uk</a>
        </div>
        <svg class="h-[9px] w-[18px]" viewBox="0 0 18 9"><path d="M0 0H18L9 9z" fill="#eee"/></svg>
      </section>

      <h2 class="mt-[55px] font-['Open_Sans',sans-serif] text-[17px] leading-6 text-[#6f6f6f]">Client Testimonials</h2>
      <section class="mt-[11px] flex flex-col items-center">
        <blockquote class="h-[148px] w-full rounded-xl bg-[#eeeeee] pt-[14px] pr-[13px] pl-[9px] text-[13px] leading-[18px] font-medium text-[#909090]">
          <svg class="mb-1 block h-[14px] w-5" viewBox="0 0 20 14" aria-hidden="true"><path id="q" d="M8 .500C3 2 0 6 0 10c0 2.500 1.500 4 4 4s4-1.500 4-4-1.500-4-3.500-4C5 4 6 2 8 .500z" fill="#999"/><use href="#q" x="12"/></svg>
          <p class="text-justify [text-align-last:justify]">Lorem ipsum dolor sit amet, consectetur<br>adipiscing elit.Proin est ipsum, consequat sed<br>fermentum eget, elementum eu augue. Morbi<br>ac mi lectus. Pellentesque lobortis mi aliquet</p>
          <p>arcu tincidunt malesuada.</p>
        </blockquote>
        <svg class="h-[9px] w-[18px]" viewBox="0 0 18 9"><path d="M0 0H18L9 9z" fill="#eee"/></svg>
      </section>
      <p class="mt-px pr-[57px] text-right text-[13px] leading-5 font-bold text-[#00718f]">A. Smith, Somerset</p>

      <div class="mt-[29px] mr-1 flex justify-center gap-3">
        <a href="#" aria-label="Mobile"><svg class="size-[38px]" viewBox="0 0 38 38"><circle cx="19" cy="19" r="18.500" fill="#fff" stroke="#b5b5b5"/><circle cx="19" cy="19" r="16" fill="url(#gGreen)"/><path d="M10 15h8v12H10zM18 15V12" fill="none" stroke="#fff" stroke-width="2"/><path d="M21 17q2 3 0 6M24 15q4 5 0 10M27 13q5 7 0 14" fill="none" stroke="#fff" stroke-width="1.500"/><path d="M13-1H38V14C30 15 30 12 26 13 21 8 14 8 14 0z" fill="#fff"/><path d="M14 .500C14 7 21 9 24 12 28 11 32 14 37 14 33 6 24 0 14 .500z" fill="url(#fold)" stroke="#bbb" stroke-width=".6"/></svg></a>
        <a href="#" aria-label="Facebook"><svg class="size-[38px]" viewBox="0 0 38 38"><circle cx="19" cy="19" r="18.500" fill="#fff" stroke="#b5b5b5"/><circle cx="19" cy="19" r="16" fill="url(#gNavy)"/><path d="M16 29V20H13V16H16V14C16 10.500 18 9 21 9H23V13H21.500C20.500 13 20 13.500 20 14.500V16H23.500L23 20H20V29z" fill="#fff"/><path d="M13-1H38V14C30 15 30 12 26 13 21 8 14 8 14 0z" fill="#fff"/><path d="M14 .500C14 7 21 9 24 12 28 11 32 14 37 14 33 6 24 0 14 .500z" fill="url(#fold)" stroke="#bbb" stroke-width=".6"/></svg></a>
        <a href="#" aria-label="Twitter"><svg class="size-[38px]" viewBox="0 0 38 38"><circle cx="19" cy="19" r="18.500" fill="#fff" stroke="#b5b5b5"/><circle cx="19" cy="19" r="16" fill="url(#gBlue)"/><path d="M14 11V20.500Q14 25 19 25H24M14 16.500H24" fill="none" stroke="#fff" stroke-width="6.500" stroke-linecap="round"/><path d="M14 11V20.500Q14 25 19 25H24M14 16.500H24" fill="none" stroke="#45b5ec" stroke-width="3.500" stroke-linecap="round"/><path d="M13-1H38V14C30 15 30 12 26 13 21 8 14 8 14 0z" fill="#fff"/><path d="M14 .500C14 7 21 9 24 12 28 11 32 14 37 14 33 6 24 0 14 .500z" fill="url(#fold)" stroke="#bbb" stroke-width=".6"/></svg></a>
      </div>

      <h2 class="mt-[19px] font-['Open_Sans',sans-serif] text-[17px] leading-6 text-[#6f6f6f]">Stocks</h2>
      <section class="mt-3 flex flex-col items-center">
        <div class="h-[198px] w-full rounded-xl bg-[#eeeeee] pt-[19px] pr-[13px] pl-[15px]">
          <table class="w-full table-fixed border-collapse text-[13px] text-[#3d3d3d]">
            <colgroup><col class="w-[33px]"><col class="w-[62px]"><col class="w-[75px]"><col class="w-[61px]"><col></colgroup>
            <thead><tr class="h-[33px] bg-[#00bbe3] text-white"><th></th><th class="border-r border-[#7fdcf0] pr-[14px]">Value</th><th class="border-r border-[#7fdcf0] pl-[2px]">Move</th><th class="pl-4">%</th><th></th></tr></thead>
            <tbody>
              <tr class="h-[31px]"><td></td><th colspan="3" class="border-b border-white/70 text-left">FTSE 100</th><td></td></tr>
              <tr class="h-[36px] text-[#f50000]"><td></td><td class="border-r border-b border-white/70 pl-[7px]">5,545.23</td><td class="border-r border-b border-white/70 pr-[5px]"><span class="flex items-center justify-end gap-2">-15.24<svg class="h-3 w-3" viewBox="0 0 12 12"><path d="M0 0H12L7 12H5z" fill="#f00"/></svg></span></td><td class="border-b border-white/70"><span class="flex items-center justify-end gap-[6px]">-0.25<svg class="h-3 w-3" viewBox="0 0 12 12"><path d="M0 0H12L7 12H5z" fill="#f00"/></svg></span></td><td></td></tr>
              <tr class="h-[34px]"><td></td><th colspan="3" class="border-b border-white/70 text-left">FTSE All Share</th><td></td></tr>
              <tr class="h-[36px] text-[#2d6a00]"><td></td><td class="border-r border-b border-white/70 pl-[7px]">3,200.54</td><td class="border-r border-b border-white/70 pr-[5px]"><span class="flex items-center justify-end gap-2">7.68<svg class="h-3 w-3" viewBox="0 0 12 12"><path d="M0 12H12L7 0H5z" fill="#2d6a00"/></svg></span></td><td class="border-b border-white/70"><span class="flex items-center justify-end gap-[10px]">0.45<svg class="h-3 w-3" viewBox="0 0 12 12"><path d="M0 12H12L7 0H5z" fill="#2d6a00"/></svg></span></td><td></td></tr>
            </tbody>
          </table>
        </div>
        <svg class="h-[9px] w-[18px]" viewBox="0 0 18 9"><path d="M0 0H18L9 9z" fill="#eee"/></svg>
      </section>
    </aside>
  </main>

  <footer class="mt-[51px] bg-[#1cc4e4] text-[#0b4f6c]">
    <div class="mx-auto h-[13px] w-[86%] bg-[radial-gradient(ellipse_50%_100%_at_50%_0%,#0d6c80_0%,#127f95_55%,transparent_100%)]"></div>
    <div class="flex items-start pr-[72px] pl-[110px] [text-shadow:1px_1px_2px_rgba(255,255,255,.45)]">
      <section class="w-[183px]">
        <h2 class="pl-[5px] text-[14px] leading-6 font-bold text-[#055b8c]">QUICK LINKS</h2>
        <div class="mt-[2px] w-[168px] border-t border-dashed border-[#0d8fb3]"></div>
        <ul class="mt-[10px] pl-4 text-[13px] leading-[23px]">
          <li class="flex items-center gap-[7px]"><svg class="h-2 w-[7px]"><use href="#chev"/></svg><a href="#">Funds Supermarket</a></li>
          <li class="flex items-center gap-[7px]"><svg class="h-2 w-[7px]"><use href="#chev"/></svg><a href="#">Morningstar</a></li>
          <li class="flex items-center gap-[7px]"><svg class="h-2 w-[7px]"><use href="#chev"/></svg><a href="#">Trustnet</a></li>
          <li class="flex items-center gap-[7px]"><svg class="h-2 w-[7px]"><use href="#chev"/></svg><a href="#">Budget Summary</a></li>
          <li class="flex items-center gap-[7px]"><svg class="h-2 w-[7px]"><use href="#chev"/></svg><a href="#">Jargon Buster</a></li>
          <li class="flex items-center gap-[7px]"><svg class="h-2 w-[7px]"><use href="#chev"/></svg><a href="#">Tell a Friend</a></li>
          <li class="flex items-center gap-[7px]"><svg class="h-2 w-[7px]"><use href="#chev"/></svg><a href="#">Calculators</a></li>
          <li class="flex items-center gap-[7px]"><svg class="h-2 w-[7px]"><use href="#chev"/></svg><a href="#">Currency Converter</a></li>
        </ul>
      </section>
      <section class="w-[258px] pt-px">
        <h2 class="pl-[10px] text-[14px] leading-6 font-bold text-[#055b8c]">TWEETS FROM THE EXPERTS</h2>
        <div class="mt-[2px] ml-[15px] w-[168px] border-t border-dashed border-[#0d8fb3]"></div>
        <ul class="mt-[23px] flex flex-col gap-[16px] font-['Liberation_Sans',Arial,sans-serif] text-[12px] whitespace-nowrap">
          <li class="flex h-11 gap-[5px]"><svg class="mt-[2px] h-[34px] w-10"><use href="#tweet"/></svg><div><a href="#" class="block w-[175px] border-b border-[#0b6a88] text-[13px] leading-[17px] text-[#0a4560]">about 2 hours ago @john4812</a><p class="mt-1 leading-5">Lorem ipsum dolor sit amet,</p></div></li>
          <li class="flex h-11 gap-[5px]"><svg class="mt-[2px] h-[34px] w-10"><use href="#tweet"/></svg><div><a href="#" class="block w-[175px] border-b border-[#0b6a88] text-[13px] leading-[17px] text-[#0a4560]">about 2 hours ago @john4812</a><p class="mt-1 leading-5">Lorem ipsum dolor sit amet,</p></div></li>
          <li class="flex h-11 gap-[5px]"><svg class="mt-[2px] h-[34px] w-10"><use href="#tweet"/></svg><div><a href="#" class="block w-[175px] border-b border-[#0b6a88] text-[13px] leading-[17px] text-[#0a4560]">about 2 hours ago @john4812</a><p class="mt-1 leading-5">Lorem ipsum dolor sit amet,</p></div></li>
          <li class="flex h-11 gap-[5px]"><svg class="mt-[2px] h-[34px] w-10"><use href="#tweet"/></svg><div><a href="#" class="block w-[175px] border-b border-[#0b6a88] text-[13px] leading-[17px] text-[#0a4560]">about 2 hours ago @john4812</a><p class="mt-1 leading-5">Lorem ipsum dolor sit amet,</p></div></li>
        </ul>
      </section>
      <section class="w-[168px]">
        <h2 class="pl-[5px] text-[14px] leading-6 font-bold text-[#055b8c]">OUR PARTNERS</h2>
        <div class="mt-[2px] w-[168px] border-t border-dashed border-[#0d8fb3]"></div>
        <div class="mt-[22px] ml-[10px] grid w-[149px] grid-cols-2 gap-x-[5px] gap-y-[2px] [text-shadow:none]">
          <svg class="h-[71px] w-[72px] border-[5px] border-[#93cfe8] bg-white" viewBox="0 0 62 61" font-family="Liberation Sans, sans-serif"><path d="M11 9Q22 11 31 5 41 11 51 9V15Q50 24 51 33 50 46 31 54 12 46 11 33 12 24 11 15z" fill="#8d8d8d" stroke="#666"/><g fill="#fff" font-weight="700" font-style="italic"><text transform="translate(20 23) rotate(-14)" font-size="9">THE</text><text transform="translate(14 38) rotate(-20)" font-size="7">SALVATION</text><text transform="translate(23 47) rotate(-18)" font-size="8">ARMY</text></g></svg>
          <svg class="h-[71px] w-[72px] border-[5px] border-[#93cfe8] bg-white" viewBox="0 0 62 61" font-family="Noto Sans, sans-serif"><g stroke="#777" stroke-width="5"><path d="M11 22L16 26M19 12L23 18M29 8L30 15M41 10L38 16M51 20L46 24"/></g><text x="8" y="48" font-size="28" font-weight="600" fill="#555">nfx</text><text x="8" y="54" font-size="4" font-weight="700" fill="#666">NORD FRANCE EXPERTS</text></svg>
          <svg class="h-[71px] w-[72px] border-[5px] border-[#93cfe8] bg-white" viewBox="0 0 62 61" font-family="Liberation Sans, sans-serif"><text x="4" y="26" font-size="12" font-weight="700" fill="#fff" stroke="#333" stroke-width=".9">Peace</text><text x="42" y="23" font-size="5" font-weight="700" fill="#333">begins</text><text x="47" y="30" font-size="5" font-weight="700" fill="#333">at</text><path d="M4 36L22 28 56 38" fill="none" stroke="#555"/><g font-family="Liberation Serif, serif" font-size="20" font-weight="700" fill="#222"><text x="4" y="51">H</text><text x="29" y="51" font-size="17">M</text><text x="46" y="51" font-size="14">E</text></g><path d="M24 50Q17 40 20 36 23 34 25 38 27 34 30 36 32 40 24 50z" fill="#888"/></svg>
          <svg class="h-[71px] w-[72px] border-[5px] border-[#93cfe8] bg-white" viewBox="0 0 62 61" font-family="Liberation Sans, sans-serif"><path d="M20 16H31L42 33 32 51H21L31 33z" fill="#777"/><path d="M35 16H51L43 30z" fill="#666"/><text x="7" y="40" font-size="9" font-weight="700" fill="#666">the</text><text transform="translate(37 51) rotate(-60)" font-size="4" fill="#777">YMCA</text></svg>
          <svg class="h-[71px] w-[72px] border-[5px] border-[#93cfe8] bg-white" viewBox="0 0 62 61"><circle cx="31" cy="31" r="22.500" fill="#555"/><circle cx="31" cy="31" r="18" fill="none" stroke="#aaa" stroke-width="3" stroke-dasharray="2 2"/><path d="M31 13C38 22 36 28 34 33 38 24 48 26 46 34 44 38 40 36 40 34L37 41H25L22 34C22 36 18 38 16 34 14 26 24 24 28 33 26 28 24 22 31 13zM26 43H36L31 51z" fill="#aaa" stroke="#333" stroke-width=".8"/></svg>
          <svg class="h-[71px] w-[72px] border-[5px] border-[#93cfe8] bg-white" viewBox="0 0 62 61" font-family="Liberation Sans, sans-serif"><path d="M31 12L37 22 31 25 25 23z" fill="#555"/><text x="3" y="38" font-size="15" font-weight="700" fill="#555">Greater</text><text x="13" y="46" font-size="6" font-style="italic" font-family="Liberation Serif, serif" fill="#555">Building Society</text><path d="M4 49Q30 44 54 48M5 51Q30 47 46 52" fill="none" stroke="#999"/></svg>
        </div>
      </section>
      <section class="flex-1">
        <div class="pl-[41px]">
          <h2 class="pl-[4px] text-[14px] leading-6 font-bold text-[#055b8c]">CONTACT US</h2>
          <div class="mt-[2px] w-[168px] border-t border-dashed border-[#0d8fb3]"></div>
          <address class="mt-[13px] pl-[3px] text-[13px] leading-[23px] not-italic">Company Name,<br>Company Address Line 1,<br>Company Address Line 2,<br>Town/City,<br>County, Postcode<br>T: 03333 447 300<br>F: Company Fax</address>
        </div>
        <p class="mt-[23px] text-right"><a href="#" class="inline-block border-b border-[#0b4f6c] text-[14px] leading-4 font-bold">Email: info@adviserwebsitepro.co.uk</a></p>
        <p class="mt-[13px] pb-[11px] text-right text-[11px] leading-[19px] whitespace-nowrap">© Copyright 2013 - Adviser Pro - All Rights Reserved<br>Designed &amp; Developed by Adviser Pro © 2013</p>
      </section>
    </div>
  </footer>
</div>
</body>
</html>
